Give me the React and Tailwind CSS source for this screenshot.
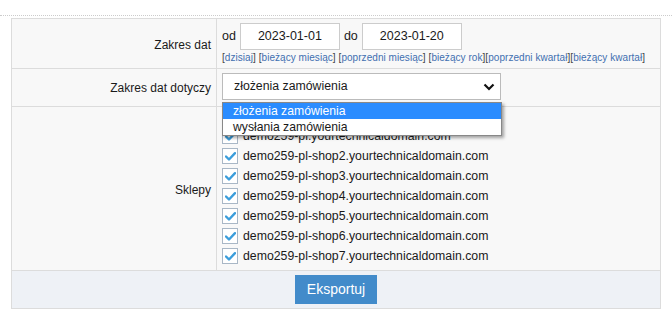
import React from "react";

const shops = [
  "demo259-pl.yourtechnicaldomain.com",
  "demo259-pl-shop2.yourtechnicaldomain.com",
  "demo259-pl-shop3.yourtechnicaldomain.com",
  "demo259-pl-shop4.yourtechnicaldomain.com",
  "demo259-pl-shop5.yourtechnicaldomain.com",
  "demo259-pl-shop6.yourtechnicaldomain.com",
  "demo259-pl-shop7.yourtechnicaldomain.com",
];

const links = [
  ["dzisiaj", " "],
  ["bieżący miesiąc", " "],
  ["poprzedni miesiąc", " "],
  ["bieżący rok", ""],
  ["poprzedni kwartał", ""],
  ["bieżący kwartał", ""],
];

function Check() {
  return (
    <span className="w-[16px] h-[16px] border border-[#a9b7c6] bg-white flex items-center justify-center shrink-0">
      <svg width="11" height="9" viewBox="0 0 11 9">
        <path d="M1 4.5 L4 7.5 L10 1.2" fill="none" stroke="#3b9ddb" strokeWidth="2.4" strokeLinecap="round" strokeLinejoin="round" />
      </svg>
    </span>
  );
}

export default function App() {
  return (
    <div className="w-[672px] h-[320px] bg-white text-[#1a1a1a] font-['Liberation_Sans',Arial,sans-serif] text-[12px]">
      <div className="h-[15px]" />
      <div className="border-t border-dotted border-[#ccc]" />
      <div className="ml-[11px] mt-[2px] w-[650px] border border-[#dcdcdc] bg-[#f8f8f8] relative">
        {/* Row 1 */}
        <div className="grid grid-cols-[205px_1fr] border-b border-[#dcdcdc] h-[50px]">
          <div className="border-r border-[#dcdcdc] flex items-start justify-end pr-[5px] pt-[17px]">Zakres dat</div>
          <div className="pl-[5px] pt-[4px]">
            <div className="flex items-center h-[27px] text-[12.5px]">
              <span className="mr-[4px]">od</span>
              <div className="w-[100px] h-[27px] border border-[#ccc] bg-white flex items-center justify-center text-[12.5px]">2023-01-01</div>
              <span className="ml-[4px] mr-[4px]">do</span>
              <div className="w-[100px] h-[27px] border border-[#ccc] bg-white flex items-center justify-center text-[12.5px]">2023-01-20</div>
            </div>
            <div className="text-[10px] leading-[13px] mt-[1px] whitespace-nowrap tracking-[0.05px]">
              {links.map(([t, s], i) => (
                <React.Fragment key={i}>
                  <span className="text-[#444]">[</span>
                  <span className="text-[#3f6fb0]">{t}</span>
                  <span className="text-[#444]">]</span>
                  {s}
                </React.Fragment>
              ))}
            </div>
          </div>
        </div>
        {/* Row 2 */}
        <div className="grid grid-cols-[205px_1fr] border-b border-[#dcdcdc] h-[38px]">
          <div className="border-r border-[#dcdcdc] flex items-center justify-end pr-[5px]">Zakres dat dotyczy</div>
          <div className="pl-[5px] pt-[4px]">
            <div className="w-[279px] h-[27px] border border-[#bbb] bg-white flex items-center justify-between pl-[11px] pr-[5px] text-[12.3px]">
              <span>złożenia zamówienia</span>
              <svg width="12" height="8" viewBox="0 0 12 8">
                <path d="M1.5 1.5 L6 6 L10.5 1.5" fill="none" stroke="#111" strokeWidth="2.2" />
              </svg>
            </div>
          </div>
        </div>
        {/* Row 3 */}
        <div className="grid grid-cols-[205px_1fr] border-b border-[#dcdcdc] h-[164px]">
          <div className="border-r border-[#dcdcdc] flex items-center justify-end pr-[5px] pt-[2px]">Sklepy</div>
          <div className="pl-[5px] pt-[19px] flex flex-col">
            {shops.map((s) => (
              <div key={s} className="h-[20px] flex items-center gap-[5px] text-[12.3px]">
                <Check />
                <span>{s}</span>
              </div>
            ))}
          </div>
        </div>
        {/* Footer */}
        <div className="bg-[#eef1f6] h-[37px] flex items-center justify-center">
          <button className="w-[82px] h-[29px] bg-[#428bca] text-white text-[14px] font-['Liberation_Sans',Arial,sans-serif]">Eksportuj</button>
        </div>
        {/* Dropdown overlay */}
        <div className="absolute left-[210px] top-[83px] w-[280px] bg-white border border-[#888] shadow-[2px_2px_3px_rgba(0,0,0,0.35)] text-[12.2px]">
          <div className="h-[16px] leading-[16px] bg-[#2a8cff] text-white pl-[10px]">złożenia zamówienia</div>
          <div className="h-[16px] leading-[16px] pl-[10px]">wysłania zamówienia</div>
        </div>
      </div>
    </div>
  );
}
